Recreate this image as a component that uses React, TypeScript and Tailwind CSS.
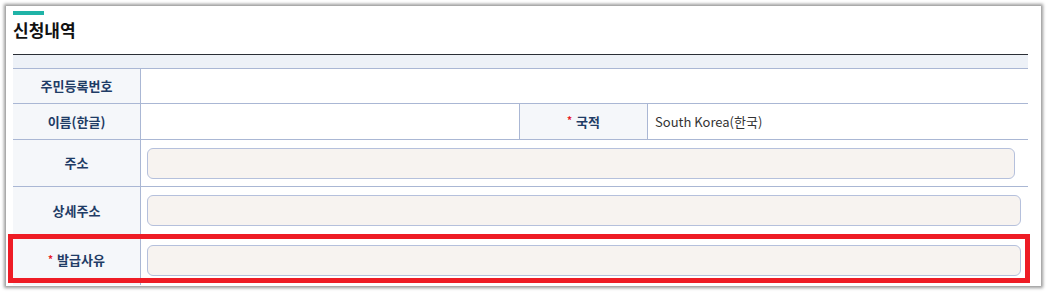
const font = { fontFamily: '"Noto Sans CJK KR", "Noto Sans", sans-serif' };

function Label({ text, required, className = "" }: { text: string; required?: boolean; className?: string }) {
  return (
    <div
      className={`flex w-[128px] shrink-0 items-center justify-center border-r border-[#aab7d4] bg-[#f5f7fa] text-[13px] font-bold text-[#1f3c66] ${className}`}
    >
      {required && <span className="mr-[4px] -mt-[4px] text-[10px] text-[#e8202a]">*</span>}
      {text}
    </div>
  );
}

function Field({ wide }: { wide?: boolean }) {
  return (
    <div className={`flex flex-1 items-center pl-[6px] ${wide ? "pr-[7px]" : "pr-[13px]"}`}>
      <div className="h-[31px] w-full rounded-[6px] border border-[#b5c0dc] bg-[#f7f3f0]" />
    </div>
  );
}

export default function App() {
  return (
    <div className="h-[292px] w-[1048px] overflow-hidden bg-white pl-[6px] pt-[6px]" style={font}>
      <div className="relative h-[280px] w-[1035px] bg-white pl-[7px] pr-[13px] shadow-[0_0_3px_2px_rgba(0,0,0,0.4)]">
        <div className="pt-[5px]">
          <div className="h-[4px] w-[31px] bg-[#1fb3a7]" />
          <h2 className="mt-[3px] text-[17px] leading-[24px] font-bold text-[#111]">신청내역</h2>
        </div>

        <div className="mt-[12px] border-t border-[#2b2f36]">
          <div className="h-[14px] border-b border-[#aab7d4] bg-[#edf1f7]" />

          <div className="flex h-[35px] border-b border-[#aab7d4]">
            <Label text="주민등록번호" />
            <div className="flex-1" />
          </div>

          <div className="flex h-[36px] border-b border-[#aab7d4]">
            <Label text="이름(한글)" />
            <div className="w-[379px] border-r border-[#aab7d4]" />
            <Label text="국적" required />
            <div className="flex flex-1 items-center pl-[7px] text-[13px] text-[#333]">South Korea(한국)</div>
          </div>

          <div className="flex h-[47px] border-b border-[#aab7d4]">
            <Label text="주소" />
            <Field />
          </div>

          <div className="flex h-[48px] border-b border-[#aab7d4]">
            <Label text="상세주소" />
            <Field wide />
          </div>

          <div className="flex h-[50px]">
            <Label text="발급사유" required />
            <Field wide />
          </div>
        </div>

        <div className="pointer-events-none absolute left-[2px] top-[228px] h-[49px] w-[1022px] border-[5px] border-[#ee1c25]" />
      </div>
    </div>
  );
}
